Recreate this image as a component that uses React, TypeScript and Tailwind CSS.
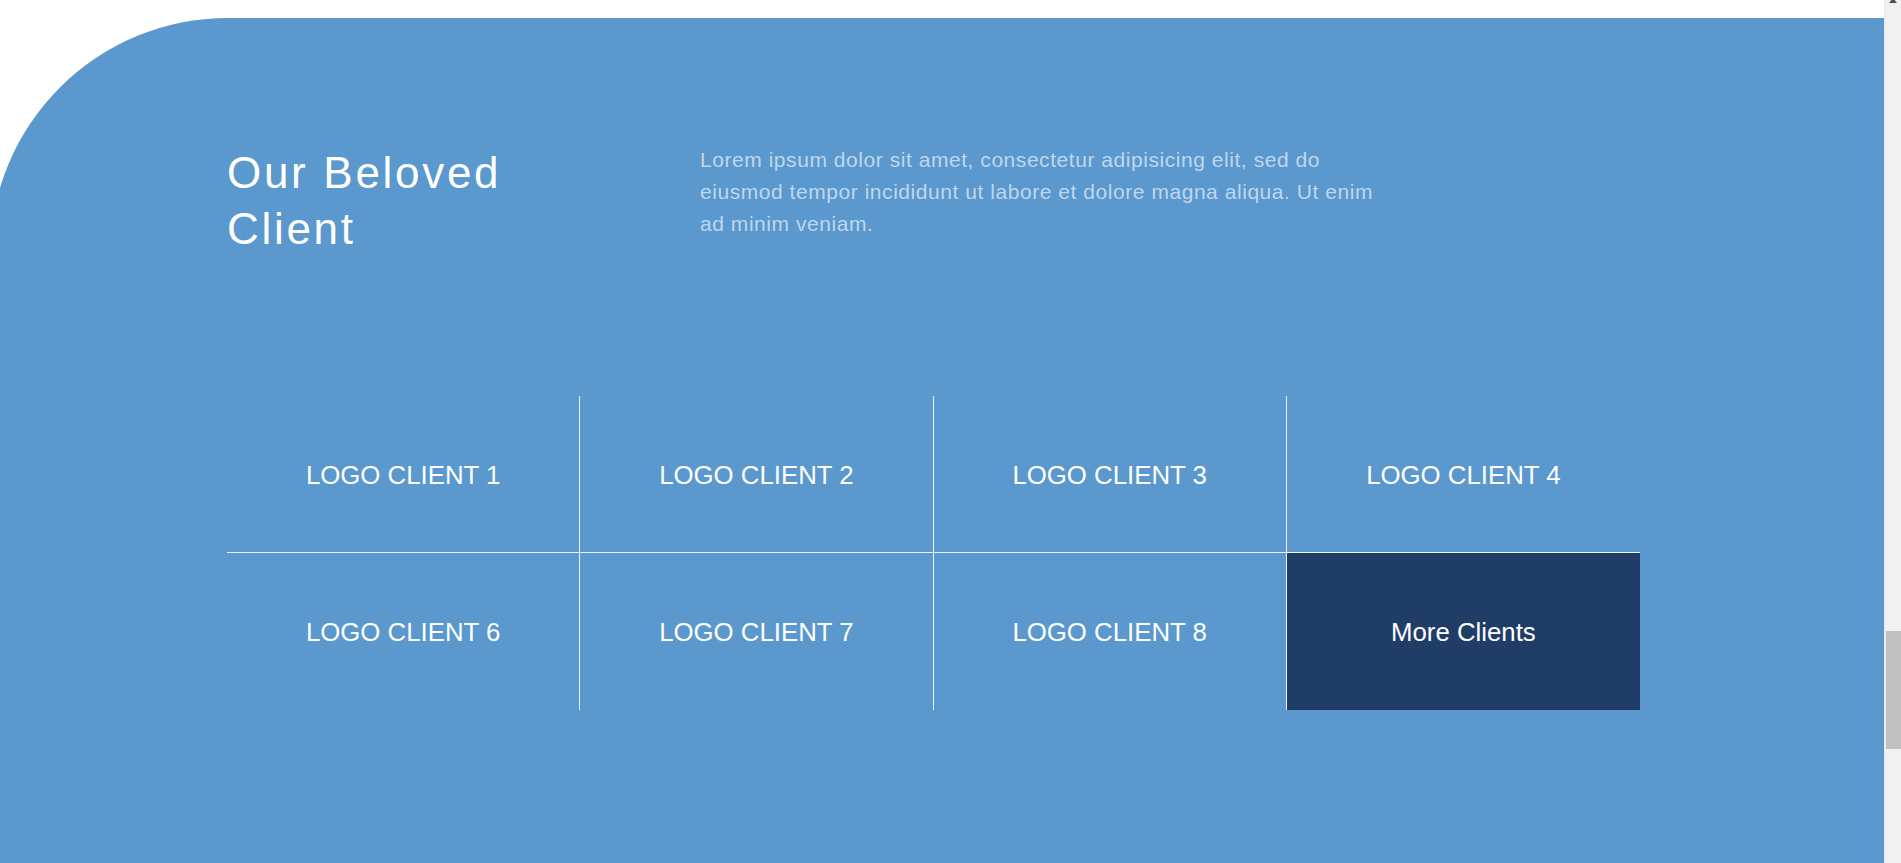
import React from "react";

const cells = [
  { label: "LOGO CLIENT 1", cls: "border-r border-b" },
  { label: "LOGO CLIENT 2", cls: "border-r border-b" },
  { label: "LOGO CLIENT 3", cls: "border-r border-b" },
  { label: "LOGO CLIENT 4", cls: "border-b" },
];
const cells2 = [
  { label: "LOGO CLIENT 6" },
  { label: "LOGO CLIENT 7" },
  { label: "LOGO CLIENT 8" },
];

export default function App() {
  return (
    <div
      className="flex h-[863px] w-full overflow-hidden bg-white"
      style={{ fontFamily: '"Liberation Sans", Arial, sans-serif' }}
    >
      <main className="flex min-w-0 flex-1 flex-col">
        <div className="h-[18px] shrink-0 bg-white" />
        <section className="-ml-[10px] flex-1 rounded-tl-[238px] bg-[#5a98cd] pl-[237px] pt-[126px]">
          <div className="flex items-start">
            <h2 className="mt-[1px] w-[473px] text-[44px] font-normal leading-[56px] tracking-[2.7px] text-white">
              Our Beloved
              <br />
              Client
            </h2>
            <p className="w-[684px] text-[21px] leading-[32px] tracking-[0.55px] text-[#bfd7ee]">
              Lorem ipsum dolor sit amet, consectetur adipisicing elit, sed do
              eiusmod tempor incididunt ut labore et dolore magna aliqua. Ut
              enim ad minim veniam.
            </p>
          </div>

          <div className="mt-[139px] grid w-[1413px] grid-cols-4">
            {cells.map((c) => (
              <div
                key={c.label}
                className={`flex h-[157px] items-center justify-center border-white/90 pt-[2px] text-[25.8px] text-white ${c.cls}`}
              >
                {c.label}
              </div>
            ))}
            {cells2.map((c) => (
              <div
                key={c.label}
                className="flex h-[157px] items-center justify-center border-r border-white/90 pt-[2px] text-[25.8px] text-white"
              >
                {c.label}
              </div>
            ))}
            <div className="flex h-[157px] items-center justify-center bg-[#203d67] pt-[2px] text-[25.8px] text-white">
              More Clients
            </div>
          </div>
        </section>
      </main>

      <aside className="flex w-[17px] shrink-0 flex-col border-l border-[#e8e8e8] bg-[#f1f1f1]">
        <div className="mx-auto -mt-[2px] h-0 w-0 border-x-[4.5px] border-b-[5px] border-x-transparent border-b-[#505050]" />
        <div className="ml-[1px] mt-[628px] h-[118px] w-[15px] bg-[#c1c1c1]" />
      </aside>
    </div>
  );
}
